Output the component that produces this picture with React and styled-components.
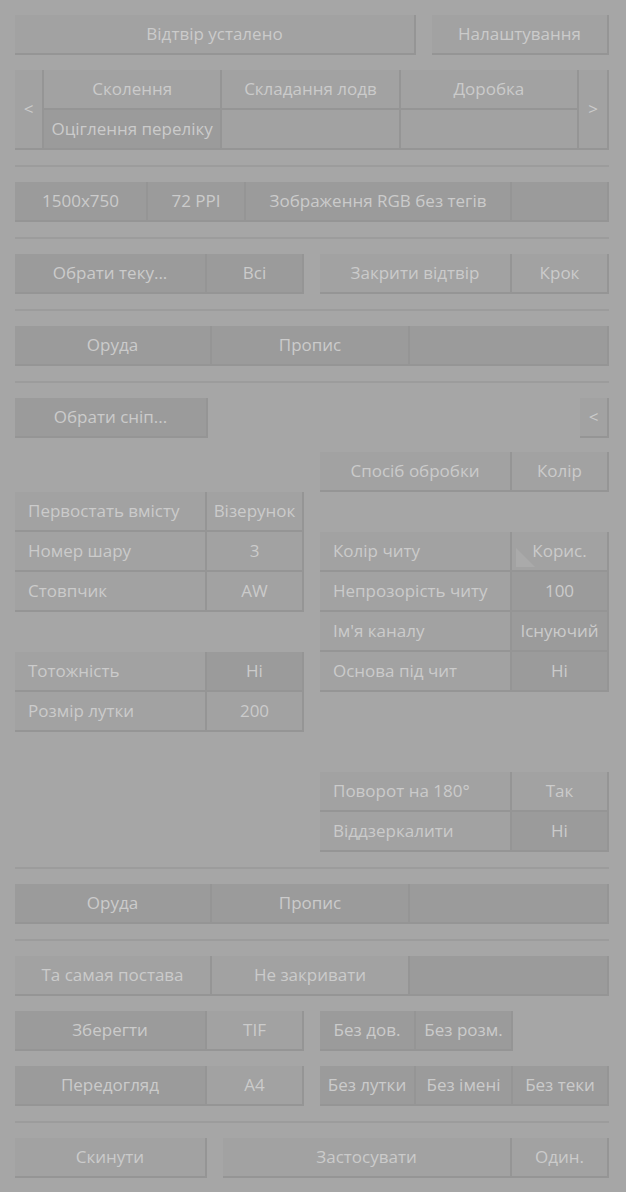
import React from "react";
import styled, { createGlobalStyle, css } from "styled-components";

const GlobalStyle = createGlobalStyle`
  html, body {
    margin: 0;
    padding: 0;
    background: #a6a6a6;
  }
  body {
    font-family: "Open Sans", "Noto Sans", sans-serif;
  }
`;

const Page = styled.div`
  width: 626px;
  min-height: 1192px;
  box-sizing: border-box;
  padding: 15px 17px 17px 15px;
  display: flex;
  flex-direction: column;
  background: #a6a6a6;
`;

const Row = styled.div`
  display: flex;
  gap: ${(p) => p.$gap ?? 16}px;
  margin-top: ${(p) => p.$mt ?? 0}px;
  justify-content: ${(p) => p.$justify || "flex-start"};
`;

const Group = styled.div`
  display: flex;
`;

const Cell = styled.div`
  position: relative;
  box-sizing: border-box;
  flex: 0 0 ${(p) => (p.$w ? `${p.$w}px` : "auto")};
  ${(p) => !p.$w && css`flex: 1 1 0;`}
  height: ${(p) => p.$h ?? 40}px;
  background: ${(p) => (p.$dark ? "#9b9b9b" : "#a2a2a2")};
  border-right: 2px solid #959595;
  border-bottom: 2px solid #959595;
  color: #cbcbcb;
  font-size: 17px;
  line-height: 1;
  display: flex;
  align-items: center;
  justify-content: ${(p) => (p.$left ? "flex-start" : "center")};
  padding: ${(p) => (p.$left ? "0 0 1px 13px" : "0 0 1px 0")};
  white-space: nowrap;
  overflow: hidden;
  ${(p) =>
    p.$corner &&
    css`
      &::before {
        content: "";
        position: absolute;
        left: 4px;
        bottom: 3px;
        width: 0;
        height: 0;
        border-style: solid;
        border-width: 19px 0 0 19px;
        border-color: transparent transparent transparent #aaaaaa;
      }
    `}
`;

const CellText = styled.span`
  position: relative;
`;

const Sep = styled.div`
  height: 2px;
  background: #9c9c9c;
  margin: 15px 0;
`;

const TabsBlock = styled.div`
  display: flex;
  margin-top: 15px;
`;

const TabGrid = styled.div`
  flex: 1 1 0;
  display: grid;
  grid-template-columns: repeat(3, 1fr);
  grid-template-rows: 40px 40px;
`;

const Split = styled.div`
  display: flex;
  gap: 16px;
`;

const Column = styled.div`
  flex: 0 0 289px;
  display: flex;
  flex-direction: column;
`;

const Table = styled.div`
  display: flex;
  flex-direction: column;
  margin-top: ${(p) => p.$mt ?? 0}px;
`;

const EndGroup = styled.div`
  display: flex;
  justify-content: flex-end;
`;

const PropRow = ({ label, value, dark, corner }) => (
  <Group>
    <Cell $w={192} $left>
      {label}
    </Cell>
    <Cell $w={97} $dark={dark} $corner={corner}>
      <CellText>{value}</CellText>
    </Cell>
  </Group>
);

const ThirdsRow = ({ a, b, c, darkA, darkB, darkC }) => (
  <Group>
    <Cell $w={197} $dark={darkA}>{a}</Cell>
    <Cell $w={198} $dark={darkB}>{b}</Cell>
    <Cell $w={199} $dark={darkC}>{c}</Cell>
  </Group>
);

export default function App() {
  return (
    <>
      <GlobalStyle />
      <Page>
        <Row>
          <Cell $w={401}>Відтвір усталено</Cell>
          <Cell $w={177}>Налаштування</Cell>
        </Row>

        <TabsBlock>
          <Cell $w={29} $h={80}>&lt;</Cell>
          <TabGrid>
            <Cell>Сколення</Cell>
            <Cell>Складання лодв</Cell>
            <Cell>Доробка</Cell>
            <Cell $dark>Оціглення переліку</Cell>
            <Cell />
            <Cell />
          </TabGrid>
          <Cell $w={30} $h={80}>&gt;</Cell>
        </TabsBlock>

        <Sep />

        <Group>
          <Cell $w={133} $dark>1500x750</Cell>
          <Cell $w={98} $dark>72 PPI</Cell>
          <Cell $w={266} $dark>Зображення RGB без тегів</Cell>
          <Cell $w={97} $dark />
        </Group>

        <Sep />

        <Row>
          <Group>
            <Cell $w={192} $dark>Обрати теку...</Cell>
            <Cell $w={97} $dark>Всі</Cell>
          </Group>
          <Group>
            <Cell $w={192}>Закрити відтвір</Cell>
            <Cell $w={97}>Крок</Cell>
          </Group>
        </Row>

        <Sep />

        <ThirdsRow a="Оруда" b="Пропис" c="" darkA darkB darkC />

        <Sep />

        <Split>
          <Column>
            <Group>
              <Cell $w={193} $dark>Обрати сніп...</Cell>
            </Group>
            <Table $mt={54}>
              <PropRow label="Первостать вмісту" value="Візерунок" />
              <PropRow label="Номер шару" value="3" />
              <PropRow label="Стовпчик" value="AW" />
            </Table>
            <Table $mt={40}>
              <PropRow label="Тотожність" value="Ні" dark />
              <PropRow label="Розмір лутки" value="200" />
            </Table>
          </Column>
          <Column>
            <EndGroup>
              <Cell $w={29}>&lt;</Cell>
            </EndGroup>
            <Table $mt={14}>
              <Group>
                <Cell $w={192}>Спосіб обробки</Cell>
                <Cell $w={97}>Колір</Cell>
              </Group>
            </Table>
            <Table $mt={40}>
              <PropRow label="Колір читу" value="Корис." corner />
              <PropRow label="Непрозорість читу" value="100" dark />
              <PropRow label="Ім'я каналу" value="Існуючий" dark />
              <PropRow label="Основа під чит" value="Ні" dark />
            </Table>
            <Table $mt={80}>
              <PropRow label="Поворот на 180°" value="Так" />
              <PropRow label="Віддзеркалити" value="Ні" dark />
            </Table>
          </Column>
        </Split>

        <Sep />

        <ThirdsRow a="Оруда" b="Пропис" c="" darkA darkB darkC />

        <Sep />

        <ThirdsRow a="Та самая постава" b="Не закривати" c="" darkC />

        <Row $mt={15}>
          <Group>
            <Cell $w={192} $dark>Зберегти</Cell>
            <Cell $w={97}>TIF</Cell>
          </Group>
          <Group>
            <Cell $w={96} $dark>Без дов.</Cell>
            <Cell $w={97} $dark>Без розм.</Cell>
          </Group>
        </Row>

        <Row $mt={15}>
          <Group>
            <Cell $w={192} $dark>Передогляд</Cell>
            <Cell $w={97}>A4</Cell>
          </Group>
          <Group>
            <Cell $w={96} $dark>Без лутки</Cell>
            <Cell $w={97} $dark>Без імені</Cell>
            <Cell $w={96} $dark>Без теки</Cell>
          </Group>
        </Row>

        <Sep />

        <Row>
          <Cell $w={192}>Скинути</Cell>
          <Group>
            <Cell $w={289}>Застосувати</Cell>
            <Cell $w={97}>Один.</Cell>
          </Group>
        </Row>
      </Page>
    </>
  );
}
